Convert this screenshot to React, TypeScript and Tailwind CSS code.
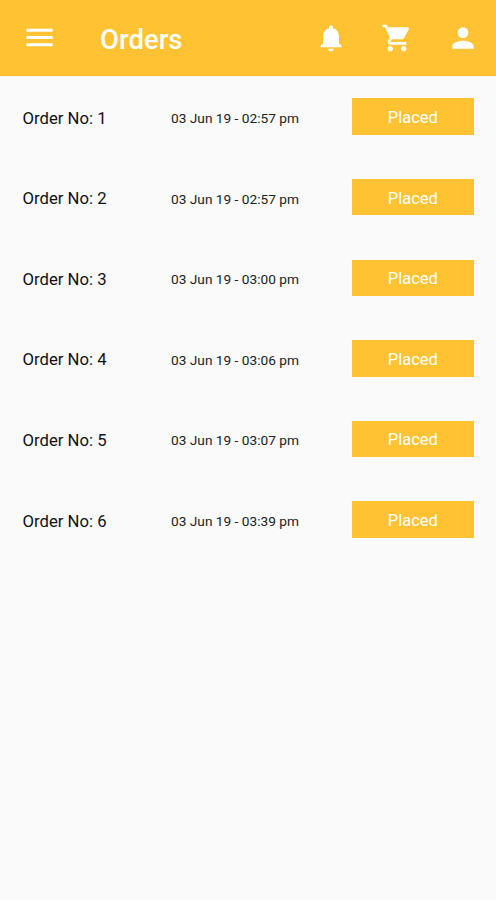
import React from 'react';
import { MdMenu, MdNotifications, MdShoppingCart, MdPerson } from 'react-icons/md';

interface Order {
  id: number;
  placedAt: string;
  status: string;
}

const orders: Order[] = [
  { id: 1, placedAt: '03 Jun 19 - 02:57 pm', status: 'Placed' },
  { id: 2, placedAt: '03 Jun 19 - 02:57 pm', status: 'Placed' },
  { id: 3, placedAt: '03 Jun 19 - 03:00 pm', status: 'Placed' },
  { id: 4, placedAt: '03 Jun 19 - 03:06 pm', status: 'Placed' },
  { id: 5, placedAt: '03 Jun 19 - 03:07 pm', status: 'Placed' },
  { id: 6, placedAt: '03 Jun 19 - 03:39 pm', status: 'Placed' },
];

const Header: React.FC = () => (
  <header className="flex h-[76px] items-center border-b border-[#fabc2f] bg-[#ffc233] pl-[21.5px] pr-[17px] text-white">
    <button aria-label="Menu">
      <MdMenu className="h-[35px] w-[35px]" />
    </button>
    <h1 className="ml-[43.5px] flex-1 pt-[5px] text-[27.5px] font-medium leading-none">Orders</h1>
    <div className="flex items-center gap-[34px] pt-px">
      <button aria-label="Notifications">
        <MdNotifications className="h-8 w-8" />
      </button>
      <button aria-label="Cart">
        <MdShoppingCart className="h-8 w-8" />
      </button>
      <button aria-label="Profile">
        <MdPerson className="h-8 w-8" />
      </button>
    </div>
  </header>
);

const OrderRow: React.FC<{ order: Order }> = ({ order }) => (
  <li className="flex h-[80.6px] items-center px-[22px]">
    <span className="w-[149px] pl-[0.5px] pt-[3px] text-[16.7px] text-[#111]">Order No: {order.id}</span>
    <span className="flex-1 pt-[3px] text-[13.7px] text-[#222]">{order.placedAt}</span>
    <span className="flex h-[36.4px] w-[122.4px] items-center justify-center bg-[#ffc233] pt-[3.5px] text-[16.5px] text-white">
      {order.status}
    </span>
  </li>
);

export default function App() {
  return (
    <div className="h-[900px] bg-[#fafafa] font-[Roboto,sans-serif]">
      <Header />
      <ul className="pt-[0.4px]">
        {orders.map(order => (
          <OrderRow key={order.id} order={order} />
        ))}
      </ul>
    </div>
  );
}
